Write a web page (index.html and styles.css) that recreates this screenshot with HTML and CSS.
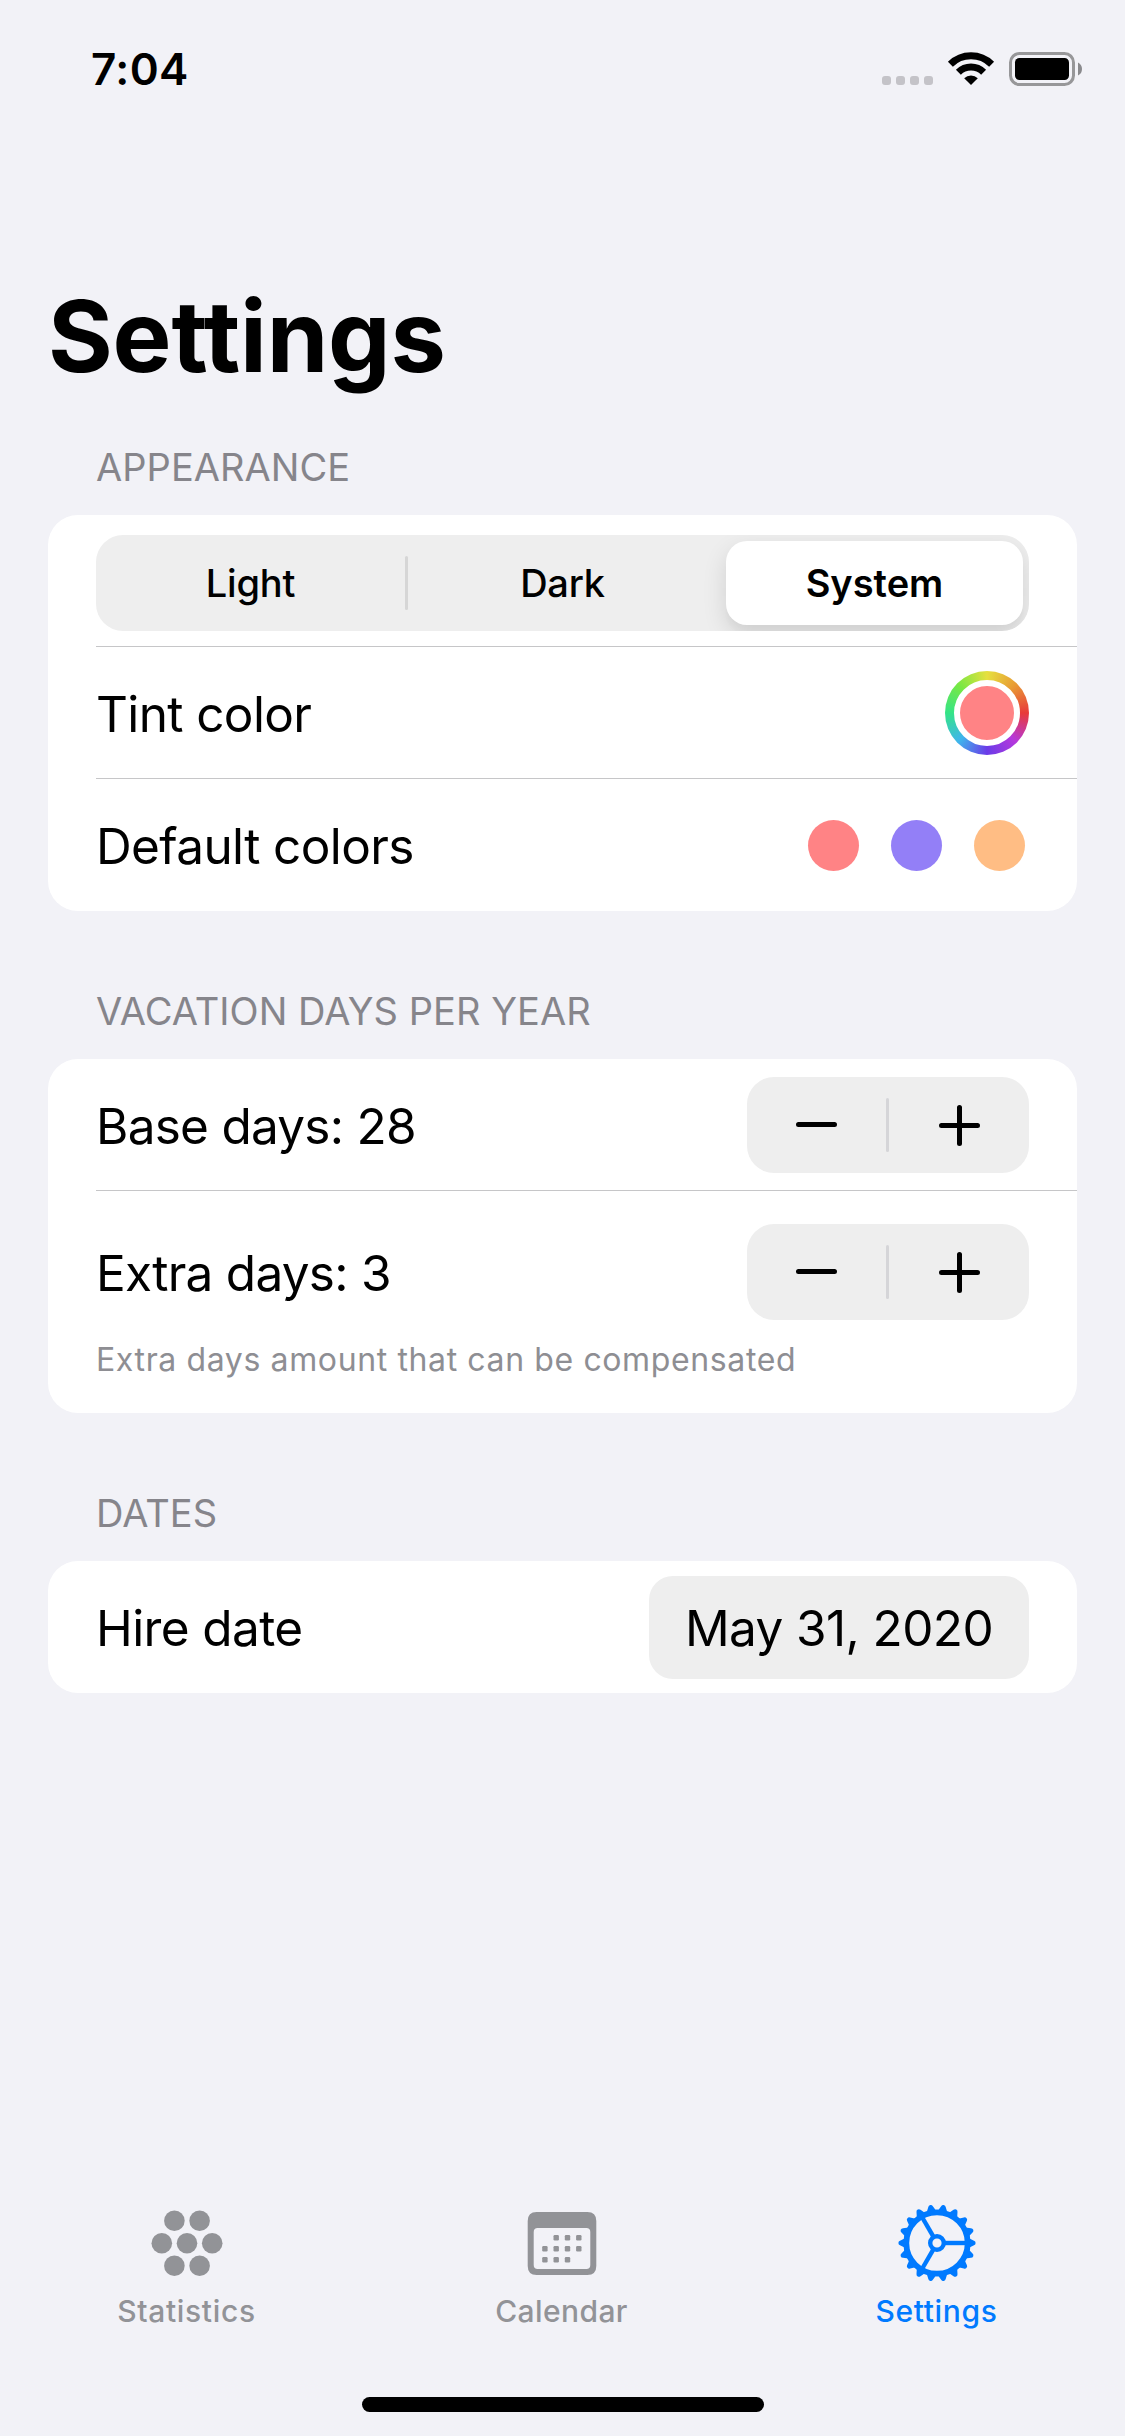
FILE: index.html
```html
<!DOCTYPE html>
<html lang="en">
<head>
<meta charset="utf-8">
<title>Settings</title>
<link rel="stylesheet" href="styles.css">
</head>
<body>
<header class="status">
  <span class="time">7:04</span>
  <svg class="status-icons" width="202" height="36" viewBox="881 51 202 36">
    <g fill="#c4c3c8">
      <rect x="882" y="76" width="9" height="9" rx="3"/>
      <rect x="896" y="76" width="9" height="9" rx="3"/>
      <rect x="910" y="76" width="9" height="9" rx="3"/>
      <rect x="924" y="76" width="9" height="9" rx="3"/>
    </g>
    <g fill="none" stroke="#000" stroke-width="7">
      <path d="M950.4 64.2A29.2 29.2 0 0 1 991.6 64.2"/>
      <path d="M958.4 72.2A17.9 17.9 0 0 1 983.6 72.2"/>
    </g>
    <path d="M971 85L964.2 78.2A9.9 9.9 0 0 1 977.8 78.2Z"/>
    <rect x="1010.5" y="53.5" width="63" height="31" rx="9" fill="none" stroke="#979799" stroke-width="3"/>
    <rect x="1015" y="58" width="54" height="22" rx="4.5"/>
    <path d="M1078 62.5Q1082 64.5 1082 69Q1082 73.5 1078 75.5Z" fill="#8a8a8d"/>
  </svg>
</header>

<main class="content">
  <h1 class="title">Settings</h1>

  <h2 class="section appearance">APPEARANCE</h2>
  <section class="card">
    <div class="row row-seg">
      <div class="segmented">
        <span class="seg seg-light">Light</span>
        <span class="seg-divider"></span>
        <span class="seg seg-dark">Dark</span>
        <span class="seg seg-on">System</span>
      </div>
    </div>
    <div class="row">
      <span class="label">Tint color</span>
      <span class="well"><span class="well-color"></span></span>
    </div>
    <div class="row">
      <span class="label">Default colors</span>
      <span class="dots"><i class="dot red"></i><i class="dot violet"></i><i class="dot orange"></i></span>
    </div>
  </section>

  <h2 class="section">VACATION DAYS PER YEAR</h2>
  <section class="card">
    <div class="row">
      <span class="label label-days">Base days: 28</span>
      <span class="stepper">
        <svg width="282" height="96" viewBox="0 0 282 96" stroke-linecap="round" stroke-width="5">
          <path d="M51.5 47.5H87.5M194.5 48.5H230.5M212.5 30.5V66.5" stroke="#000"/>
          <rect x="139" y="21" width="3" height="54" rx="1.5" fill="#d5d5d8"/>
        </svg>
      </span>
    </div>
    <div class="row row-extra">
      <div class="line">
        <span class="label label-days">Extra days: 3</span>
        <span class="stepper">
          <svg width="282" height="96" viewBox="0 0 282 96" stroke-linecap="round" stroke-width="5">
            <path d="M51.5 47.5H87.5M194.5 48.5H230.5M212.5 30.5V66.5" stroke="#000"/>
            <rect x="139" y="21" width="3" height="54" rx="1.5" fill="#d5d5d8"/>
          </svg>
        </span>
      </div>
      <p class="note">Extra days amount that can be compensated</p>
    </div>
  </section>

  <h2 class="section">DATES</h2>
  <section class="card">
    <div class="row">
      <span class="label">Hire date</span>
      <span class="date">May 31, 2020</span>
    </div>
  </section>
</main>

<nav class="tabs">
  <a class="tab">
    <svg width="80" height="78" viewBox="-40 -39 80 78" fill="currentColor">
      <circle cx="-12.6" cy="-22.3" r="10.3"/><circle cx="12.6" cy="-22.3" r="10.3"/>
      <circle cx="-25.2" cy="0.2" r="10.3"/><circle cx="0" cy="0.2" r="10.3"/><circle cx="25.2" cy="0.2" r="10.3"/>
      <circle cx="-12.6" cy="22.7" r="10.3"/><circle cx="12.6" cy="22.7" r="10.3"/>
    </svg>
    <span class="tab-label">Statistics</span>
  </a>
  <a class="tab">
    <svg width="80" height="78" viewBox="-40 -39 80 78" fill="currentColor">
      <path fill-rule="evenodd" d="M-25.3 -31H25.3Q34.3 -31 34.3 -22V23Q34.3 32 25.3 32H-25.3Q-34.3 32 -34.3 23V-22Q-34.3 -31 -25.3 -31ZM-24.3 -15Q-28.3 -15 -28.3 -11V22Q-28.3 26 -24.3 26H24.3Q28.3 26 28.3 22V-11Q28.3 -15 24.3 -15Z"/>
      <g>
        <rect x="-8.5" y="-8" width="5.4" height="5.4" rx="1.2"/><rect x="2.8" y="-8" width="5.4" height="5.4" rx="1.2"/><rect x="14.1" y="-8" width="5.4" height="5.4" rx="1.2"/>
        <rect x="-19.8" y="3" width="5.4" height="5.4" rx="1.2"/><rect x="-8.5" y="3" width="5.4" height="5.4" rx="1.2"/><rect x="2.8" y="3" width="5.4" height="5.4" rx="1.2"/><rect x="14.1" y="3" width="5.4" height="5.4" rx="1.2"/>
        <rect x="-19.8" y="14" width="5.4" height="5.4" rx="1.2"/><rect x="-8.5" y="14" width="5.4" height="5.4" rx="1.2"/><rect x="2.8" y="14" width="5.4" height="5.4" rx="1.2"/>
      </g>
    </svg>
    <span class="tab-label label-calendar">Calendar</span>
  </a>
  <a class="tab active">
    <svg width="80" height="78" viewBox="-40 -39 80 78" fill="currentColor">
      <defs>
        <path id="tooth" d="M32 -4.8L37 -2.3Q38.6 -1.7 38.6 0Q38.6 1.7 37 2.3L32 4.8Z"/>
        <g id="third">
          <use href="#tooth"/><use href="#tooth" transform="rotate(20)"/><use href="#tooth" transform="rotate(40)"/>
          <use href="#tooth" transform="rotate(60)"/><use href="#tooth" transform="rotate(80)"/><use href="#tooth" transform="rotate(100)"/>
          <rect x="7" y="-2.2" width="23" height="4.4"/>
        </g>
      </defs>
      <use href="#third"/><use href="#third" transform="rotate(120)"/><use href="#third" transform="rotate(240)"/>
      <circle r="30.7" fill="none" stroke="currentColor" stroke-width="5.8"/>
      <circle r="6.8" fill="none" stroke="currentColor" stroke-width="4.4"/>
    </svg>
    <span class="tab-label">Settings</span>
  </a>
</nav>
<div class="home"></div>
</body>
</html>
```
FILE: styles.css
```css
* { box-sizing: border-box; margin: 0; padding: 0; }
body {
  width: 1125px;
  height: 2436px;
  display: flex;
  flex-direction: column;
  background: #f2f2f7;
  color: #000;
  font-family: Inter, "Liberation Sans", sans-serif;
  overflow: hidden;
}
svg { display: block; }

.status {
  height: 138px;
  padding: 0 42px 0 91px;
  display: flex;
  align-items: center;
  justify-content: space-between;
}
.time { font-size: 44px; font-weight: 600; line-height: 54px; letter-spacing: .4px; }

.content { flex: 1; padding: 138px 48px 0; }
.title { font-size: 99px; font-weight: 700; line-height: 120px; letter-spacing: -.2px; }
.section {
  margin: 76px 0 24px;
  padding-left: 48px;
  font-size: 38px;
  font-weight: 400;
  line-height: 48px;
  letter-spacing: .05px;
  color: #86858b;
}
.section.appearance { margin-top: 47px; }

.card { background: #fff; border-radius: 30px; }
.row {
  height: 132px;
  margin-left: 48px;
  padding-right: 48px;
  display: flex;
  align-items: center;
  justify-content: space-between;
}
.row:not(:last-child) { padding-top: 1px; border-bottom: 1px solid #c6c6c8; }
.row.row-seg { padding-top: 5px; }
.label {
  padding: 2px 0 0;
  font-size: 49.5px;
  line-height: 60px;
  letter-spacing: -.62px;
  white-space: nowrap;
}
.label-days { letter-spacing: -.74px; }

.segmented {
  width: 933px;
  height: 96px;
  padding: 6px;
  display: flex;
  align-items: center;
  overflow: hidden;
  border-radius: 27px;
  background: #eee;
}
.seg {
  text-align: center;
  font-size: 38px;
  font-weight: 500;
  line-height: 84px;
  letter-spacing: -.2px;
}
.seg-light { width: 303px; padding-right: 6px; }
.seg-dark { width: 309px; margin-right: 9px; }
.seg-divider { width: 3px; height: 54px; border-radius: 2px; background: #d6d6d6; }
.seg-on {
  width: 297px;
  height: 84px;
  border-radius: 21px;
  background: #fff;
  font-weight: 600;
  letter-spacing: 0;
  box-shadow: 0 9px 24px rgba(0, 0, 0, .12), 0 9px 3px rgba(0, 0, 0, .02);
}

.well {
  width: 84px;
  height: 84px;
  padding: 9px;
  border-radius: 50%;
  background: conic-gradient(#e6e03f, #e89a35 45deg, #e83a3a 90deg, #b538dc 135deg, #6a3be8 180deg, #3fb5ec 225deg, #34e487 270deg, #78e843 315deg, #e6e03f);
}
.well-color {
  display: block;
  height: 66px;
  border: 6px solid #fff;
  border-radius: 50%;
  background: #ff8385;
}
.dots { display: flex; gap: 32px; padding-right: 4px; }
.dot { width: 51px; height: 51px; border-radius: 50%; }
.red { background: #ff8385; }
.violet { background: #937ff7; }
.orange { background: #ffbd84; }

.stepper { border-radius: 27px; background: #eee; }
.row-extra {
  height: 222px;
  padding-top: 33px;
  flex-direction: column;
  align-items: stretch;
  justify-content: flex-start;
}
.line { display: flex; align-items: center; justify-content: space-between; }
.note {
  margin-top: 20px;
  font-size: 32px;
  line-height: 40px;
  letter-spacing: .62px;
  color: #8e8e93;
}
.date {
  width: 380px;
  height: 103px;
  border-radius: 24px;
  background: #eee;
  text-align: center;
  font-size: 49.5px;
  line-height: 105px;
  letter-spacing: -.6px;
}

.tabs { height: 192px; margin: 0 1px 0 -1px; display: flex; color: #929397; }
.tab { flex: 1; display: flex; flex-direction: column; align-items: center; margin-top: -1px; }
.tab-label {
  margin-top: 11px;
  font-size: 30px;
  font-weight: 500;
  line-height: 36px;
  letter-spacing: .65px;
}
.label-calendar { letter-spacing: .4px; }
.active { color: #007aff; }
.home { flex: none; width: 402px; height: 15px; margin: 0 0 24px 362px; border-radius: 8px; background: #000; }
```
